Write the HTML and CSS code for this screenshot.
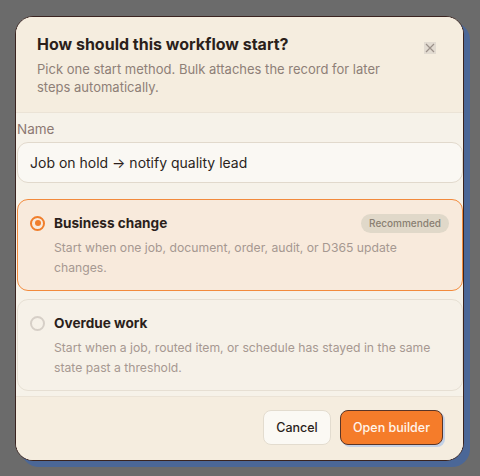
FILE: index.html
```html
<!DOCTYPE html>
<html>
<head>
<meta charset="utf-8">
<link rel="stylesheet" href="styles.css">
</head>
<body>
<div class="dialog">
  <div class="header">
    <div class="head-text">
      <h1 class="title">How should this workflow start?</h1>
      <p class="subtitle">Pick one start method. Bulk attaches the record for later steps automatically.</p>
    </div>
    <button class="close" aria-label="Close">
      <svg width="10" height="10" viewBox="0 0 10 10"><path d="M1 1L9 9M9 1L1 9" stroke="#9c918a" stroke-width="1.2" fill="none"/></svg>
    </button>
  </div>
  <div class="body">
    <label class="label">Name</label>
    <div class="input">Job on hold → notify quality lead</div>
    <div class="option selected">
      <div class="opt-head">
        <span class="radio on"></span>
        <span class="opt-title">Business change</span>
        <span class="badge">Recommended</span>
      </div>
      <p class="opt-desc">Start when one job, document, order, audit, or D365 update changes.</p>
    </div>
    <div class="option">
      <div class="opt-head">
        <span class="radio"></span>
        <span class="opt-title">Overdue work</span>
      </div>
      <p class="opt-desc">Start when a job, routed item, or schedule has stayed in the same state past a threshold.</p>
    </div>
  </div>
  <div class="footer">
    <button class="btn cancel">Cancel</button>
    <button class="btn primary">Open builder</button>
  </div>
</div>
</body>
</html>
```
FILE: styles.css
```css
* { box-sizing: border-box; }
html, body { margin: 0; padding: 0; }
body {
  background: #6b6b6b;
  font-family: "Inter", "Liberation Sans", sans-serif;
  width: 480px;
  height: 476px;
  overflow: hidden;
}
.dialog {
  margin: 16px 0 0 15px;
  width: 449px;
  height: 445px;
  border: 1.5px solid #3a2420;
  border-radius: 18px;
  box-shadow: 6px 6px 0 #4b6797;
  background: #f6f2e9;
  overflow: hidden;
  display: flex;
  flex-direction: column;
}
.header {
  background: #f5eddf;
  border-bottom: 1px solid #ebe3d6;
  padding: 16px 27px 16px 21px;
  display: flex;
  justify-content: space-between;
  align-items: flex-start;
}
.title {
  margin: 0;
  font-size: 16px;
  line-height: 22px;
  font-weight: 700;
  color: #2b1f1b;
}
.subtitle {
  margin: 5px 0 0;
  font-size: 13px;
  line-height: 18px;
  color: #8e7f77;
  width: 370px;
}
.close {
  margin-top: 9px;
  width: 12px;
  height: 12px;
  padding: 0;
  border: none;
  background: #e2dbd1;
  display: flex;
  align-items: center;
  justify-content: center;
}
.body {
  padding: 7px 0 5px 1px;
  display: flex;
  flex-direction: column;
}
.label {
  font-size: 13.5px;
  line-height: 18px;
  color: #8c7872;
}
.input {
  margin-top: 4px;
  height: 41px;
  border: 1px solid #e1d9cc;
  border-radius: 11px;
  background: #faf8f3;
  padding: 0 12px;
  display: flex;
  align-items: center;
  font-size: 14px;
  color: #2b1f1b;
}
.option {
  border: 1.5px solid #e6dfd3;
  border-radius: 11px;
  background: #f6f1e8;
  padding: 13px 13px 12px 12px;
  margin-top: 8px;
}
.option.selected {
  margin-top: 16px;
  border-color: #f28a3c;
  background: #f8eadc;
}
.opt-head {
  display: flex;
  align-items: center;
  height: 20px;
}
.radio {
  width: 15px;
  height: 15px;
  border-radius: 50%;
  border: 2px solid #d6cfc7;
  margin-right: 9px;
  flex: none;
  position: relative;
}
.radio.on {
  border-color: #f07e2c;
}
.radio.on::after {
  content: "";
  position: absolute;
  left: 2.5px;
  top: 2.5px;
  width: 6px;
  height: 6px;
  border-radius: 50%;
  background: #f07e2c;
}
.opt-title {
  font-size: 13.6px;
  font-weight: 700;
  color: #2b1f1b;
  flex: 1;
}
.badge {
  background: #e0d8c9;
  color: #8a7f72;
  font-size: 10px;
  font-weight: 500;
  border-radius: 10px;
  height: 19px;
  padding: 0 8px;
  display: flex;
  align-items: center;
}
.opt-desc {
  margin: 5px 0 0 24px;
  width: 388px;
  font-size: 12.2px;
  line-height: 20px;
  color: #a69891;
}
.footer {
  border-top: 1px solid #ebe3d6;
  background: #f5eddf;
  flex: 1;
  display: flex;
  justify-content: flex-end;
  align-items: flex-start;
  padding: 13px 20px 0 0;
  gap: 9px;
}
.btn {
  height: 35px;
  border-radius: 8px;
  font-family: inherit;
  font-size: 12.5px;
  font-weight: 500;
}
.cancel {
  width: 68px;
  background: #fbf9f4;
  border: 1px solid #e3dccf;
  color: #2b1f1b;
}
.primary {
  width: 103px;
  background: #f57c2a;
  border: 1px solid #5a3527;
  color: #fff4ea;
  box-shadow: 2px 2px 0 #c3d1e6;
}
```
